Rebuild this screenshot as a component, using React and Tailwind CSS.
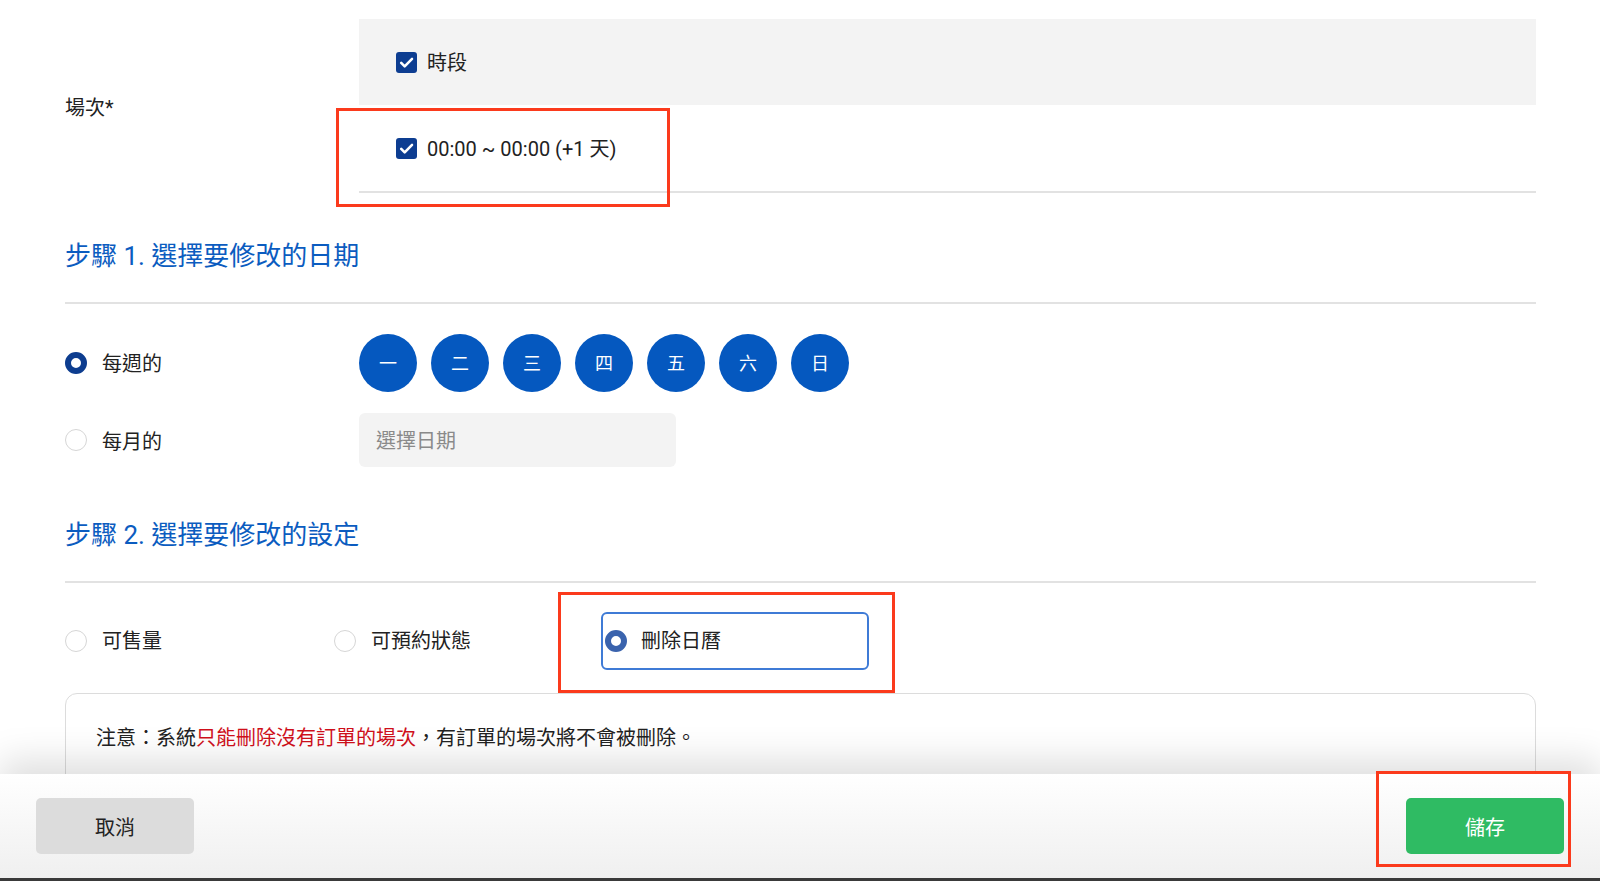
import React from "react";

const FONT = { fontFamily: 'Roboto, "Noto Sans CJK TC", "Noto Sans CJK SC", sans-serif' };

function Check() {
  return (
    <span className="flex h-[21px] w-[21px] items-center justify-center rounded-[3px] bg-[#0d3d91]">
      <svg viewBox="0 0 16 16" className="h-[17px] w-[17px]" fill="none" stroke="white" strokeWidth="2.4" strokeLinecap="round" strokeLinejoin="round">
        <path d="M3 8.3l3.3 3.4L13.2 4.6" />
      </svg>
    </span>
  );
}

function Radio({ on, light }) {
  if (on) {
    return (
      <span className={`h-[22px] w-[22px] shrink-0 rounded-full border-[6px] bg-white ${light ? "border-[#3a63ad]" : "border-[#0d3d8f]"}`} />
    );
  }
  return <span className="h-[22px] w-[22px] shrink-0 rounded-full border border-[#d6d6d6] bg-white" />;
}

const days = ["一", "二", "三", "四", "五", "六", "日"];

export default function App() {
  return (
    <div style={FONT} className="relative h-[881px] w-full overflow-hidden bg-white text-[20px] text-[#222]">
      <div className="pl-[65px] pr-[64px] pt-[19px]">
        {/* 場次 */}
        <div className="flex items-center">
          <div className="w-[294px] pt-[3px]">場次*</div>
          <div className="flex-1">
            <div className="flex h-[86px] items-center gap-[10px] bg-[#f3f3f3] pl-[37px]">
              <Check />
              <span className="pt-[2px]">時段</span>
            </div>
            <div className="flex h-[88px] items-center gap-[10px] border-b-2 border-[#e2e2e2] pl-[37px]">
              <Check />
              <span className="pt-[2px]">00:00 ~ 00:00 (+1 天)</span>
            </div>
          </div>
        </div>

        {/* Step 1 */}
        <h2 className="mt-[45px] text-[26px] leading-[36px] text-[#0b5cc0]">步驟 1. 選擇要修改的日期</h2>
        <div className="mt-[28px] h-[2px] bg-[#e2e2e2]" />
        <div className="mt-[30px] flex items-center">
          <div className="flex w-[294px] items-center gap-[15px]">
            <Radio on />
            <span className="pt-[2px]">每週的</span>
          </div>
          <div className="flex gap-[14px]">
            {days.map((d) => (
              <div key={d} className="flex h-[58px] w-[58px] items-center justify-center rounded-full bg-[#0558bf] text-[18px] text-white">
                {d}
              </div>
            ))}
          </div>
        </div>
        <div className="mt-[21px] flex items-center">
          <div className="flex w-[294px] items-center gap-[15px]">
            <Radio />
            <span className="pt-[4px]">每月的</span>
          </div>
          <div className="flex h-[54px] w-[317px] items-center rounded-md bg-[#f3f3f3] pl-[17px] pt-[2px] text-[#8a8a8a]">選擇日期</div>
        </div>

        {/* Step 2 */}
        <h2 className="mt-[50px] text-[26px] leading-[36px] text-[#0b5cc0]">步驟 2. 選擇要修改的設定</h2>
        <div className="mt-[28px] h-[2px] bg-[#e2e2e2]" />
        <div className="mt-[29px] flex items-center">
          <div className="flex w-[269px] items-center gap-[15px]">
            <Radio />
            <span>可售量</span>
          </div>
          <div className="flex w-[267px] items-center gap-[15px]">
            <Radio />
            <span>可預約狀態</span>
          </div>
          <div className="flex h-[58px] w-[268px] items-center gap-[14px] rounded-md border-2 border-[#3f7bd6] pl-[2px]">
            <Radio on light />
            <span>刪除日曆</span>
          </div>
        </div>

        <div className="mt-[23px] h-[140px] rounded-xl border border-[#dcdcdc] px-[30px] pt-[29px]">
          注意：系統<span className="text-[#d0101b]">只能刪除沒有訂單的場次</span>，有訂單的場次將不會被刪除。
        </div>
      </div>

      {/* footer */}
      <div className="absolute bottom-0 left-0 right-0 h-[107px] bg-gradient-to-b from-white to-[#efefef] shadow-[0_-14px_34px_rgba(0,0,0,0.13)]">
        <div className="flex h-[104px] items-start justify-between px-[36px] pt-[24px]">
          <button className="h-[56px] w-[158px] rounded-[5px] bg-[#dcdcdc] pt-[3px] text-[20px] text-[#222]">取消</button>
          <button className="h-[56px] w-[158px] rounded-[5px] bg-[#2fbb63] pt-[3px] text-[20px] text-white">儲存</button>
        </div>
        <div className="h-[3px] bg-[#3a3a3a]" />
      </div>

      {/* annotation boxes */}
      <div className="pointer-events-none absolute left-[336px] top-[108px] h-[99px] w-[334px] border-[3px] border-[#fb3a1c]" />
      <div className="pointer-events-none absolute left-[558px] top-[592px] h-[101px] w-[337px] border-[3px] border-[#fb3a1c]" />
      <div className="pointer-events-none absolute left-[1376px] top-[771px] h-[96px] w-[195px] border-[3px] border-[#fb3a1c]" />
    </div>
  );
}
